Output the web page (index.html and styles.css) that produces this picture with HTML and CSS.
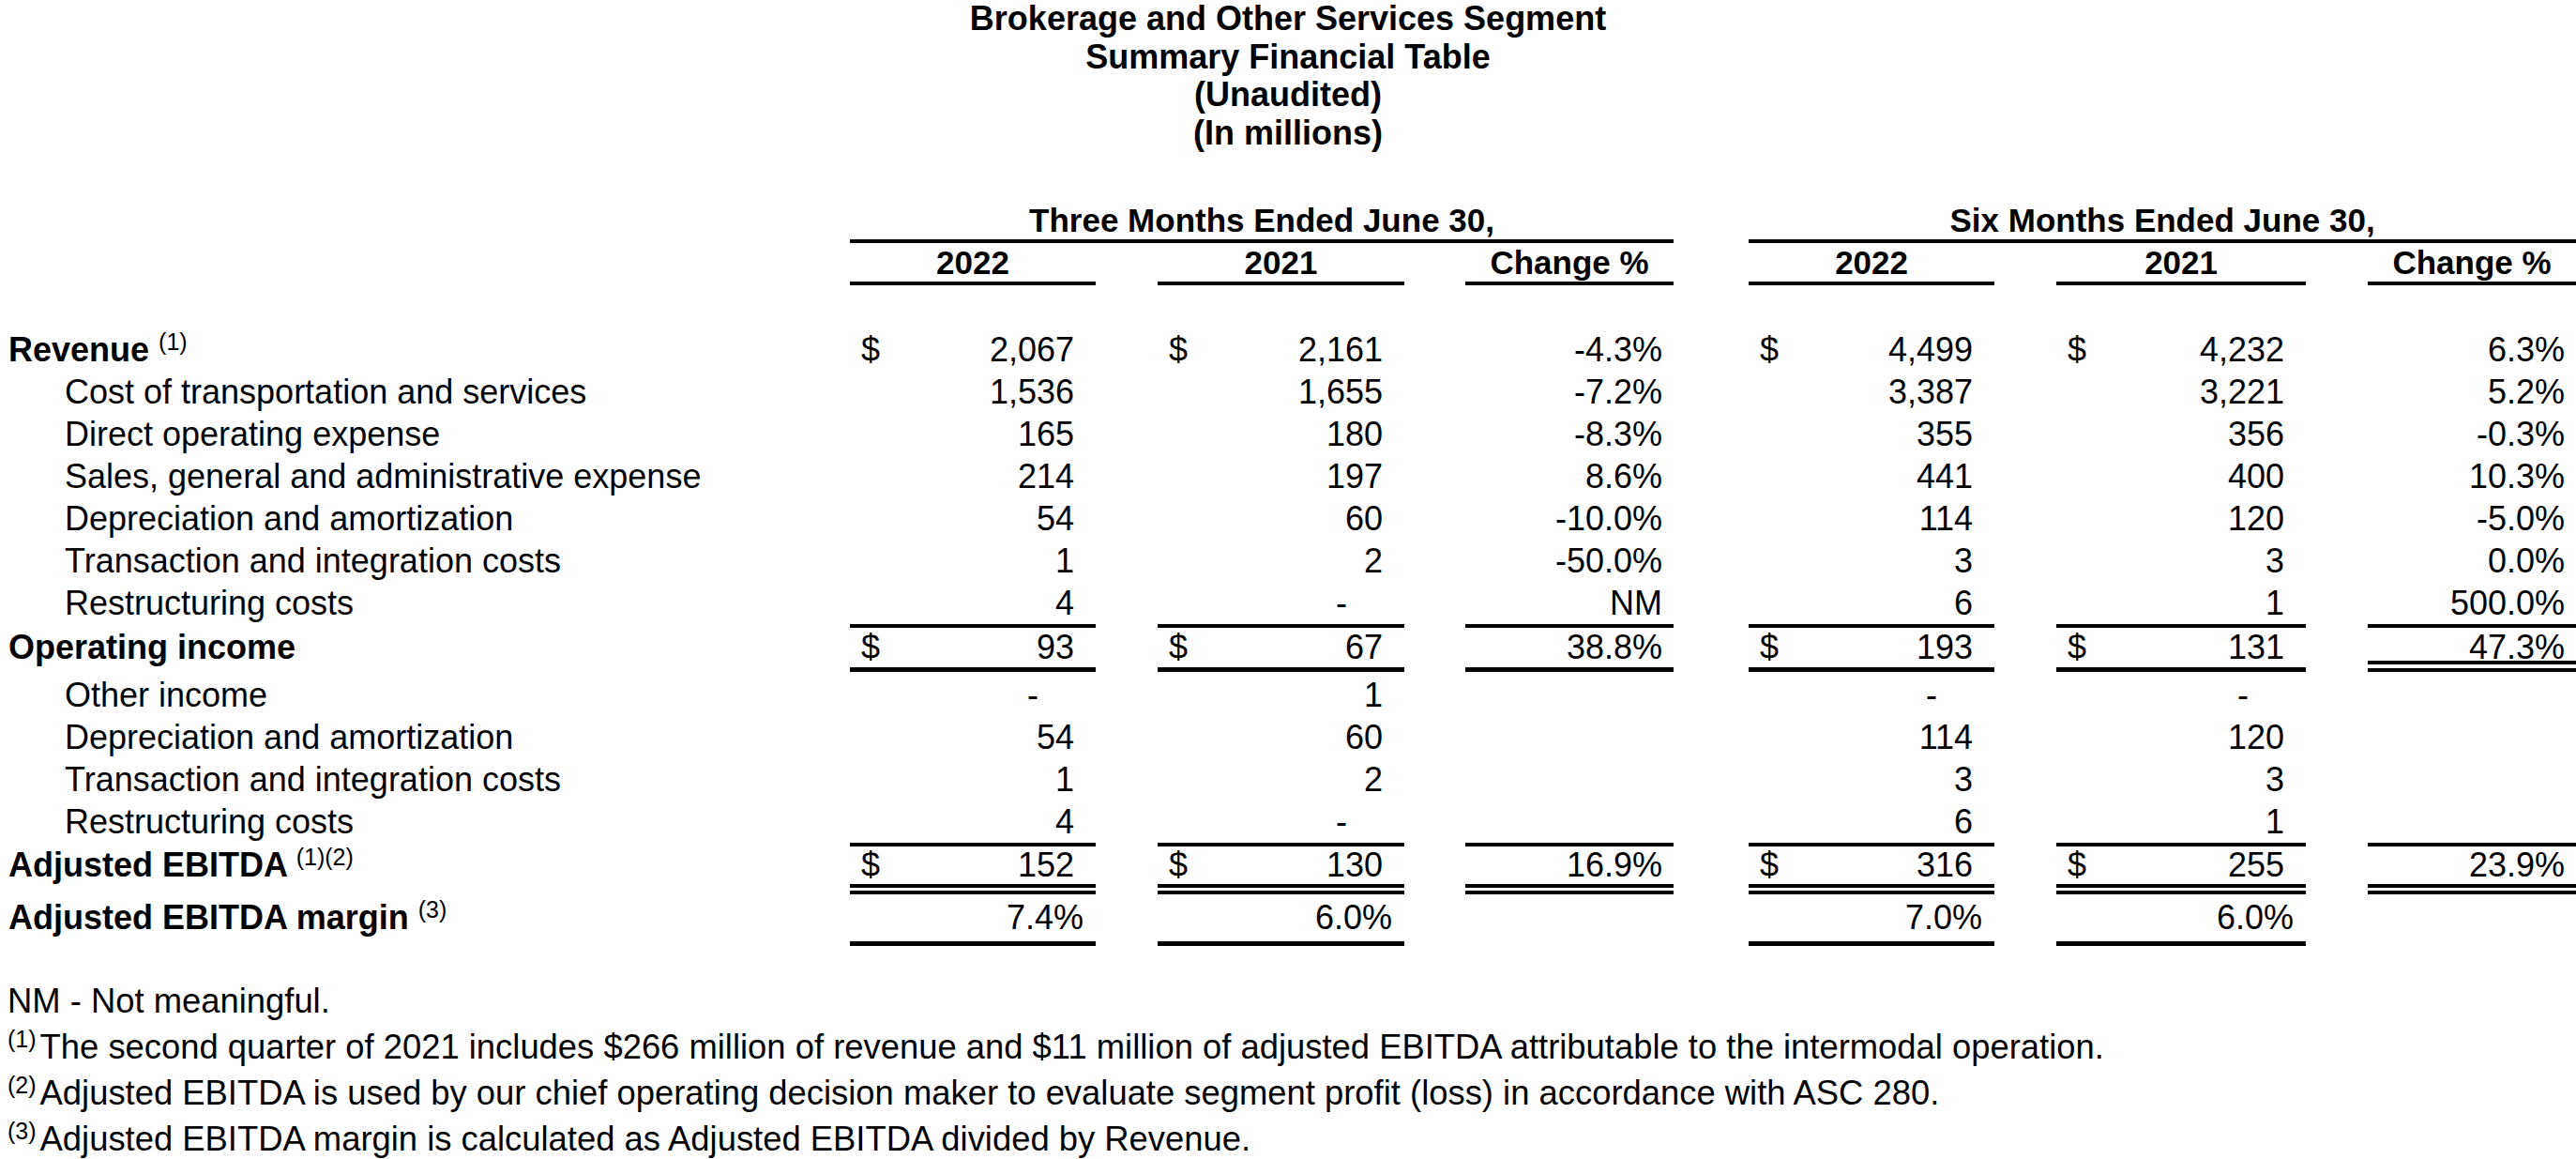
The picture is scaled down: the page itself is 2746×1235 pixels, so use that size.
FILE: index.html
```html
<!DOCTYPE html>
<html lang="en">
<head>
<meta charset="utf-8">
<title>Brokerage and Other Services Segment</title>
<link rel="stylesheet" href="styles.css">
</head>
<body>
<header class="title">
  <div>Brokerage and Other Services Segment</div>
  <div>Summary Financial Table</div>
  <div>(Unaudited)</div>
  <div>(In millions)</div>
</header>

<table class="fin">
  <colgroup>
    <col class="w-label"><col class="w-a"><col class="w-g1"><col class="w-b"><col class="w-g2"><col class="w-c">
    <col class="w-g3"><col class="w-d"><col class="w-g4"><col class="w-e"><col class="w-g5"><col class="w-f">
  </colgroup>
  <thead>
    <tr class="head1">
      <th></th>
      <th colspan="5" class="period">Three Months Ended June 30,</th>
      <th></th>
      <th colspan="5" class="period">Six Months Ended June 30,</th>
    </tr>
    <tr class="head2">
      <th></th>
      <th class="yr">2022</th><th></th><th class="yr">2021</th><th></th><th class="yr">Change %</th>
      <th></th>
      <th class="yr">2022</th><th></th><th class="yr">2021</th><th></th><th class="yr">Change %</th>
    </tr>
  </thead>
  <tbody>
    <tr class="spacer"><td colspan="12"></td></tr>
    <tr class="row">
      <td class="lbl b">Revenue <sup>(1)</sup></td>
      <td class="num"><span class="cur">$</span>2,067</td><td></td>
      <td class="num"><span class="cur">$</span>2,161</td><td></td>
      <td class="chg">-4.3%</td><td></td>
      <td class="num"><span class="cur">$</span>4,499</td><td></td>
      <td class="num"><span class="cur">$</span>4,232</td><td></td>
      <td class="chg">6.3%</td>
    </tr>
    <tr class="row">
      <td class="lbl ind">Cost of transportation and services</td>
      <td class="num">1,536</td><td></td>
      <td class="num">1,655</td><td></td>
      <td class="chg">-7.2%</td><td></td>
      <td class="num">3,387</td><td></td>
      <td class="num">3,221</td><td></td>
      <td class="chg">5.2%</td>
    </tr>
    <tr class="row">
      <td class="lbl ind">Direct operating expense</td>
      <td class="num">165</td><td></td>
      <td class="num">180</td><td></td>
      <td class="chg">-8.3%</td><td></td>
      <td class="num">355</td><td></td>
      <td class="num">356</td><td></td>
      <td class="chg">-0.3%</td>
    </tr>
    <tr class="row">
      <td class="lbl ind">Sales, general and administrative expense</td>
      <td class="num">214</td><td></td>
      <td class="num">197</td><td></td>
      <td class="chg">8.6%</td><td></td>
      <td class="num">441</td><td></td>
      <td class="num">400</td><td></td>
      <td class="chg">10.3%</td>
    </tr>
    <tr class="row">
      <td class="lbl ind">Depreciation and amortization</td>
      <td class="num">54</td><td></td>
      <td class="num">60</td><td></td>
      <td class="chg">-10.0%</td><td></td>
      <td class="num">114</td><td></td>
      <td class="num">120</td><td></td>
      <td class="chg">-5.0%</td>
    </tr>
    <tr class="row">
      <td class="lbl ind">Transaction and integration costs</td>
      <td class="num">1</td><td></td>
      <td class="num">2</td><td></td>
      <td class="chg">-50.0%</td><td></td>
      <td class="num">3</td><td></td>
      <td class="num">3</td><td></td>
      <td class="chg">0.0%</td>
    </tr>
    <tr class="row">
      <td class="lbl ind">Restructuring costs</td>
      <td class="num">4</td><td></td>
      <td class="num"><span class="dash">-</span></td><td></td>
      <td class="chg">NM</td><td></td>
      <td class="num">6</td><td></td>
      <td class="num">1</td><td></td>
      <td class="chg">500.0%</td>
    </tr>
    <tr class="total">
      <td class="lbl b">Operating income</td>
      <td class="num r"><span class="cur">$</span>93</td><td></td>
      <td class="num r"><span class="cur">$</span>67</td><td></td>
      <td class="chg r">38.8%</td><td></td>
      <td class="num r"><span class="cur">$</span>193</td><td></td>
      <td class="num r"><span class="cur">$</span>131</td><td></td>
      <td class="chg r dbl">47.3%</td>
    </tr>
    <tr class="row first-after">
      <td class="lbl ind">Other income</td>
      <td class="num"><span class="dash">-</span></td><td></td>
      <td class="num">1</td><td></td>
      <td class="chg"></td><td></td>
      <td class="num"><span class="dash">-</span></td><td></td>
      <td class="num"><span class="dash">-</span></td><td></td>
      <td class="chg"></td>
    </tr>
    <tr class="row">
      <td class="lbl ind">Depreciation and amortization</td>
      <td class="num">54</td><td></td>
      <td class="num">60</td><td></td>
      <td class="chg"></td><td></td>
      <td class="num">114</td><td></td>
      <td class="num">120</td><td></td>
      <td class="chg"></td>
    </tr>
    <tr class="row">
      <td class="lbl ind">Transaction and integration costs</td>
      <td class="num">1</td><td></td>
      <td class="num">2</td><td></td>
      <td class="chg"></td><td></td>
      <td class="num">3</td><td></td>
      <td class="num">3</td><td></td>
      <td class="chg"></td>
    </tr>
    <tr class="row">
      <td class="lbl ind">Restructuring costs</td>
      <td class="num">4</td><td></td>
      <td class="num"><span class="dash">-</span></td><td></td>
      <td class="chg"></td><td></td>
      <td class="num">6</td><td></td>
      <td class="num">1</td><td></td>
      <td class="chg"></td>
    </tr>
    <tr class="grand">
      <td class="lbl b">Adjusted EBITDA <sup>(1)(2)</sup></td>
      <td class="num r"><span class="cur">$</span>152</td><td></td>
      <td class="num r"><span class="cur">$</span>130</td><td></td>
      <td class="chg r">16.9%</td><td></td>
      <td class="num r"><span class="cur">$</span>316</td><td></td>
      <td class="num r"><span class="cur">$</span>255</td><td></td>
      <td class="chg r">23.9%</td>
    </tr>
    <tr class="margin">
      <td class="lbl b">Adjusted EBITDA margin <sup>(3)</sup></td>
      <td class="pct r">7.4%</td><td></td>
      <td class="pct r">6.0%</td><td></td>
      <td></td><td></td>
      <td class="pct r">7.0%</td><td></td>
      <td class="pct r">6.0%</td><td></td>
      <td></td>
    </tr>
  </tbody>
</table>

<section class="notes">
  <p>NM - Not meaningful.</p>
  <p><sup>(1)</sup>The second quarter of 2021 includes $266 million of revenue and $11 million of adjusted EBITDA attributable to the intermodal operation.</p>
  <p><sup>(2)</sup>Adjusted EBITDA is used by our chief operating decision maker to evaluate segment profit (loss) in accordance with ASC 280.</p>
  <p><sup>(3)</sup>Adjusted EBITDA margin is calculated as Adjusted EBITDA divided by Revenue.</p>
</section>
</body>
</html>
```

FILE: styles.css
```css
html, body {
  margin: 0;
  padding: 0;
  background: #ffffff;
}

body {
  color: #000000;
  font-family: "Liberation Sans", Arial, sans-serif;
  font-size: 36px;
  width: 2746px;
}

.title {
  text-align: center;
  font-weight: bold;
  line-height: 40.5px;
}

.fin {
  width: 2746px;
  table-layout: fixed;
  border-collapse: separate;
  border-spacing: 0;
  margin-top: 53px;
}

.w-label { width: 906px; }
.w-a { width: 262px; }
.w-g1 { width: 66px; }
.w-b { width: 263px; }
.w-g2 { width: 65px; }
.w-c { width: 222px; }
.w-g3 { width: 80px; }
.w-d { width: 262px; }
.w-g4 { width: 66px; }
.w-e { width: 266px; }
.w-g5 { width: 66px; }
.w-f { width: 222px; }

.fin th,
.fin td {
  padding: 0;
  white-space: nowrap;
  vertical-align: middle;
}

.fin th {
  font-weight: bold;
  font-size: 35px;
  text-align: center;
}

.head1 th {
  line-height: 40px;
}

.head2 th {
  line-height: 41px;
}

.period,
.yr {
  border-bottom: 4px solid #000;
}

.spacer td {
  height: 46px;
}

.row td {
  line-height: 45px;
}

.first-after td {
  padding-top: 2px;
}

.fin td.lbl {
  text-align: left;
  padding-left: 9px;
}

.fin td.lbl.b {
  font-weight: bold;
}

.fin td.lbl.ind {
  padding-left: 69px;
}

.lbl sup {
  font-size: 25px;
  font-weight: normal;
  line-height: 0;
  vertical-align: 12px;
}

.fin td.num {
  text-align: right;
  padding-left: 12px;
  padding-right: 23px;
}

.fin td.chg {
  text-align: right;
  padding-right: 12px;
}

.fin td.pct {
  text-align: right;
  padding-right: 13px;
}

.cur {
  float: left;
}

.dash {
  margin-right: 38px;
}

/* Operating income row */
.total td {
  line-height: 42px;
  border-top: 4px solid transparent;
  border-bottom: 5px solid transparent;
}

.total td.r {
  border-top-color: #000;
  border-bottom-color: #000;
}

.total td.dbl {
  border-bottom-width: 4px;
  padding-bottom: 1px;
  background-image: linear-gradient(#000, #000);
  background-repeat: no-repeat;
  background-size: 100% 4px;
  background-position: left 0 bottom 4px;
}

/* Adjusted EBITDA row */
.grand td {
  line-height: 40px;
  border-top: 4px solid transparent;
  border-bottom: 11px double transparent;
}

.grand td.r {
  border-top-color: #000;
  border-bottom-color: #000;
}

/* Adjusted EBITDA margin row */
.margin td {
  line-height: 50px;
  border-bottom: 5px solid transparent;
}

.margin td.r {
  border-bottom-color: #000;
}

.notes {
  margin-top: 34px;
  padding-left: 8px;
  line-height: 49px;
  font-size: 36.4px;
}

.notes p {
  margin: 0;
}

.notes sup {
  font-size: 25px;
  line-height: 0;
  vertical-align: 12px;
  margin-right: 4px;
}
```
